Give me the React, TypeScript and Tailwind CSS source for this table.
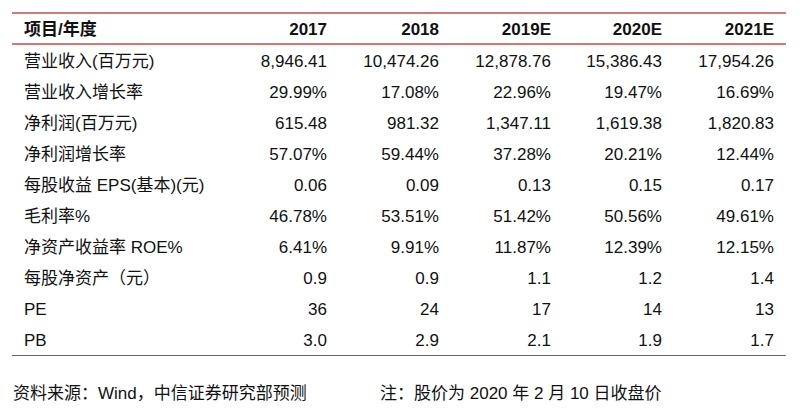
import React from "react";

const rows: string[][] = [
  ["营业收入(百万元)", "8,946.41", "10,474.26", "12,878.76", "15,386.43", "17,954.26"],
  ["营业收入增长率", "29.99%", "17.08%", "22.96%", "19.47%", "16.69%"],
  ["净利润(百万元)", "615.48", "981.32", "1,347.11", "1,619.38", "1,820.83"],
  ["净利润增长率", "57.07%", "59.44%", "37.28%", "20.21%", "12.44%"],
  ["每股收益 EPS(基本)(元)", "0.06", "0.09", "0.13", "0.15", "0.17"],
  ["毛利率%", "46.78%", "53.51%", "51.42%", "50.56%", "49.61%"],
  ["净资产收益率 ROE%", "6.41%", "9.91%", "11.87%", "12.39%", "12.15%"],
  ["每股净资产（元）", "0.9", "0.9", "1.1", "1.2", "1.4"],
  ["PE", "36", "24", "17", "14", "13"],
  ["PB", "3.0", "2.9", "2.1", "1.9", "1.7"],
];

const header = ["项目/年度", "2017", "2018", "2019E", "2020E", "2021E"];

const gridCls = "grid grid-cols-[215px_112px_112px_112px_111px_112px] items-center";

export default function App() {
  return (
    <div
      className="w-[803px] h-[411px] bg-white text-[#111] text-[17px] pt-3"
      style={{ fontFamily: '"Liberation Sans", "Noto Sans CJK SC", sans-serif' }}
    >
      <div className="ml-3 w-[774px]">
        <div className="h-[2px] bg-[#d4787a]" />
        <div className={`${gridCls} h-[29px] font-bold`}>
          {header.map((h, i) => (
            <div key={i} className={i === 0 ? "pl-3 pt-[2px] whitespace-nowrap" : "text-right pr-3 pt-[2px]"}>
              {h}
            </div>
          ))}
        </div>
        <div className="h-[2px] bg-[#d4787a]" />
        {rows.map((r, ri) => (
          <div key={ri} className={`${gridCls} h-[31px]`}>
            {r.map((c, ci) => (
              <div key={ci} className={ci === 0 ? "pl-3 pt-[3px] whitespace-nowrap" : "text-right pr-3 pt-[3px]"}>
                {c}
              </div>
            ))}
          </div>
        ))}
        <div className="h-px bg-[#d8393d]" />
      </div>
      <div className="flex mt-[26px] pl-[13px] leading-6">
        <div className="w-[367px]">资料来源：Wind，中信证券研究部预测</div>
        <div>注：股价为 2020 年 2 月 10 日收盘价</div>
      </div>
    </div>
  );
}
